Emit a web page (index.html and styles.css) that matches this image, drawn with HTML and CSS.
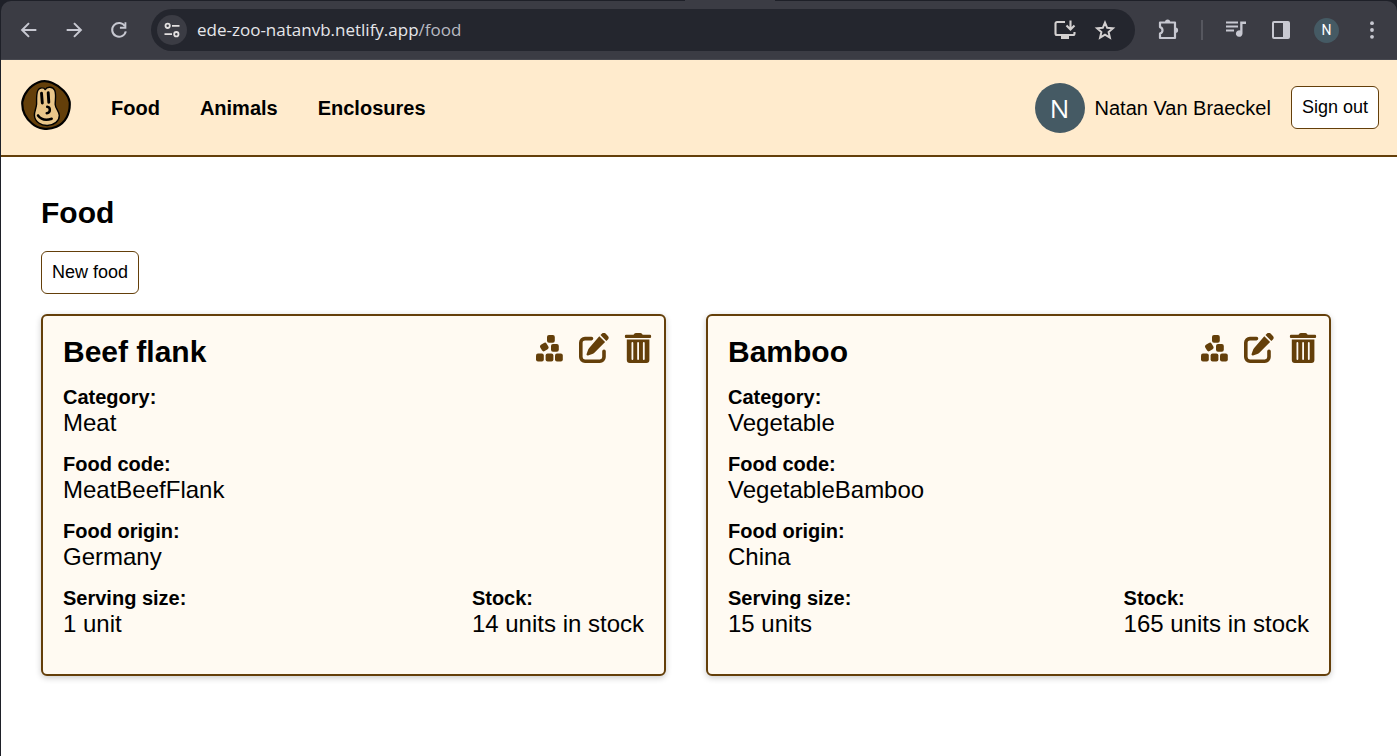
FILE: index.html
```html
<!DOCTYPE html>
<html lang="en">
<head>
<meta charset="utf-8">
<meta name="viewport" content="width=device-width, initial-scale=1">
<title>Food</title>
<link rel="stylesheet" href="styles.css">
</head>
<body>
<svg class="sprite" aria-hidden="true">
  <symbol id="cubes" viewBox="0 0 30 30">
    <rect x="13" y="2" width="7.800" height="7.800" rx="2"/>
    <rect x="6.600" y="10.300" width="7.400" height="7.400" rx="2" transform="rotate(-30 10.3 14)"/>
    <rect x="17" y="11" width="7.800" height="7.800" rx="2"/>
    <rect x="2" y="20.600" width="7.800" height="7.800" rx="2"/>
    <rect x="11.600" y="20.600" width="7.800" height="7.800" rx="2"/>
    <rect x="21" y="20.600" width="7.800" height="7.800" rx="2"/>
  </symbol>
  <symbol id="edit" viewBox="0 0 30 30">
    <path d="M12.5 5.6H6a4.2 4.2 0 0 0-4.2 4.2V24A4.2 4.2 0 0 0 6 28.2h14.8A4.2 4.2 0 0 0 25 24v-5.800" fill="none" stroke="currentColor" stroke-width="3.600" stroke-linecap="round"/>
    <path d="M20.300 3.300l5.800 5.800L15.400 19.800c-.6.600-1.300 1-2.100 1.300l-4.300 1.400c-1 .300-1.700-.400-1.400-1.400l1.500-4.300c.3-.800.700-1.500 1.300-2.100z"/>
    <path d="M21.500 2.100l1.300-1.300a2.800 2.800 0 0 1 4 0l1.900 1.900a2.800 2.800 0 0 1 0 4l-1.400 1.300z"/>
  </symbol>
  <symbol id="trash" viewBox="0 0 30 30">
    <path d="M2 1.800h7.500L10.500.5Q11 0 11.800 0h4.600q.8 0 1.300.5l1 1.300H26a1.100 1.100 0 0 1 1.100 1.100V4A1.100 1.100 0 0 1 26 5.100H2A1.100 1.100 0 0 1 .9 4V2.900A1.100 1.100 0 0 1 2 1.800z"/>
    <path fill-rule="evenodd" d="M2.800 6.600h22.600V27a3 3 0 0 1-3 3H5.800a3 3 0 0 1-3-3zM7.500 10v16a.9.9 0 0 0 1.800 0V10a.9.9 0 0 0-1.800 0zm5.700 0v16a.9.9 0 0 0 1.800 0V10a.9.9 0 0 0-1.800 0zm5.700 0v16a.9.9 0 0 0 1.800 0V10a.9.9 0 0 0-1.800 0z"/>
  </symbol>
</svg>

<div class="window">
  <div class="frame">
    <div class="tab-foot"></div>
    <div class="toolbar">
      <div class="history">
        <button class="tool" aria-label="Back"><svg viewBox="0 0 24 24"><path d="M20 12H5M12 4.500L4.500 12l7.500 7.500" fill="none" stroke="currentColor" stroke-width="2.200"/></svg></button>
        <button class="tool" aria-label="Forward"><svg viewBox="0 0 24 24"><path d="M4 12h15M12 4.500l7.500 7.500-7.500 7.500" fill="none" stroke="currentColor" stroke-width="2.200"/></svg></button>
        <button class="tool" aria-label="Reload"><svg viewBox="0 0 24 24"><path d="M18.500 8A7.500 7.500 0 1 0 19.400 13.500" fill="none" stroke="currentColor" stroke-width="2.200"/><path d="M20 3.500V10.500H13V8.500H18V3.500z"/></svg></button>
      </div>
      <div class="address">
        <button class="site-info" aria-label="View site information"><svg viewBox="0 0 24 24"><g fill="none" stroke="currentColor" stroke-width="2.200"><circle cx="6.800" cy="7" r="2.600"/><path d="M12 7h9M3 17h9"/><circle cx="17.200" cy="17" r="2.600"/></g></svg></button>
        <a class="url" href="#">ede-zoo-natanvb.netlify.app<span class="url-path">/food</span></a>
        <button class="tool" aria-label="Install app"><svg viewBox="0 0 24 24"><path d="M12 4H4a1.500 1.500 0 0 0-1.500 1.500v10A1.500 1.500 0 0 0 4 17h16a1.500 1.500 0 0 0 1.500-1.500V14M17.500 2.500v8M13.500 7.500l4 4 4-4" fill="none" stroke="currentColor" stroke-width="2.100"/><path d="M8 17h8v4H8z"/></svg></button>
        <button class="tool" aria-label="Bookmark this page"><svg viewBox="0 0 24 24"><path d="M12 4.600l2.200 5.200 5.700.5-4.300 3.700 1.300 5.600-4.900-3-4.900 3 1.300-5.600-4.300-3.700 5.700-.5z" fill="none" stroke="currentColor" stroke-width="2"/></svg></button>
      </div>
      <div class="extras">
        <button class="tool" aria-label="Extensions"><svg viewBox="0 0 24 24"><path d="M4 4.500h15v15.500H4v-4.500a3.300 3.300 0 0 0 0-6.400z" fill="none" stroke="currentColor" stroke-width="2.200" stroke-linejoin="round"/><path d="M9 4a2.600 2.600 0 0 1 5.200 0zM19.500 9.600a2.600 2.600 0 0 1 0 5.200z"/></svg></button>
        <span class="divider"></span>
        <button class="tool" aria-label="Media controls"><svg viewBox="0 0 24 24"><path d="M2 4.500h12M2 8.500h12M2 12.500h8" fill="none" stroke="currentColor" stroke-width="2"/><path d="M16.200 3.500H22V6h-3.500v9.500a3.300 3.300 0 1 1-2.300-3.100z"/></svg></button>
        <button class="tool" aria-label="Side panel"><svg viewBox="0 0 24 24"><path d="M5 3h14a2 2 0 0 1 2 2v14a2 2 0 0 1-2 2H5a2 2 0 0 1-2-2V5a2 2 0 0 1 2-2zm0 2v14h9V5z" fill-rule="evenodd"/></svg></button>
        <button class="profile" aria-label="Profile">N</button>
        <button class="tool" aria-label="Menu"><svg viewBox="0 0 24 24"><circle cx="12" cy="5.200" r="1.900"/><circle cx="12" cy="12" r="1.900"/><circle cx="12" cy="18.800" r="1.900"/></svg></button>
      </div>
    </div>
  </div>

  <header class="site-header">
    <a class="logo" href="#" aria-label="Home">
      <svg viewBox="0 0 50 50" stroke-linecap="round" stroke-linejoin="round">
        <path d="M17 2.500C22 .5 26 .6 31 2.800C40 6.500 47 14 48.700 22C49.500 34 44 43 35.500 46.800C27 50.500 17 49 11 43.500C4 37.500.8 30 1.300 22C2.500 14 9 5.500 17 2.500z" fill="#643f0a" stroke="#000" stroke-width="2.200"/>
        <path d="M24.200 9.600C23 7.200 18.500 7 16.800 10.500C15.200 14 15.600 20 15.600 24C15.400 28 13.200 31.500 13.400 35.500C14 42 20 45.700 26.500 45.500C33.500 45 38.400 41 38.300 35.500C38 31 34.400 28.500 34.200 24.500C34.200 20 35.400 15 33.800 10.500C32 6.500 26 6.200 24.200 9.600z" fill="#e9c68a" stroke="#000" stroke-width="1.400"/>
        <g fill="none" stroke="#000"><path d="M20.500 13.200L21.300 23M27.200 12.600L27.800 22.400" stroke-width="2.900"/><path d="M26.200 26.800C29.600 27.200 30 32.600 25.700 33.200" stroke-width="2.500"/><path d="M17 35.400C20 39.500 25.500 40.400 30.700 38.700" stroke-width="2.500"/></g>
      </svg>
    </a>
    <nav class="nav"><a href="#">Food</a><a href="#">Animals</a><a href="#">Enclosures</a></nav>
    <div class="account">
      <span class="avatar">N</span>
      <span class="user-name">Natan Van Braeckel</span>
      <button class="button">Sign out</button>
    </div>
  </header>

  <main class="page">
    <h1>Food</h1>
    <button class="button">New food</button>
    <div class="cards">
      <article class="card">
        <div class="card-head">
          <h2>Beef flank</h2>
          <div class="actions">
            <button aria-label="Stock of Beef flank"><svg><use href="#cubes"/></svg></button>
            <button aria-label="Edit Beef flank"><svg><use href="#edit"/></svg></button>
            <button aria-label="Delete Beef flank"><svg><use href="#trash"/></svg></button>
          </div>
        </div>
        <dl class="details">
          <div><dt>Category:</dt><dd>Meat</dd></div>
          <div><dt>Food code:</dt><dd>MeatBeefFlank</dd></div>
          <div><dt>Food origin:</dt><dd>Germany</dd></div>
        </dl>
        <dl class="amounts">
          <div><dt>Serving size:</dt><dd>1 unit</dd></div>
          <div><dt>Stock:</dt><dd>14 units in stock</dd></div>
        </dl>
      </article>
      <article class="card">
        <div class="card-head">
          <h2>Bamboo</h2>
          <div class="actions">
            <button aria-label="Stock of Bamboo"><svg><use href="#cubes"/></svg></button>
            <button aria-label="Edit Bamboo"><svg><use href="#edit"/></svg></button>
            <button aria-label="Delete Bamboo"><svg><use href="#trash"/></svg></button>
          </div>
        </div>
        <dl class="details">
          <div><dt>Category:</dt><dd>Vegetable</dd></div>
          <div><dt>Food code:</dt><dd>VegetableBamboo</dd></div>
          <div><dt>Food origin:</dt><dd>China</dd></div>
        </dl>
        <dl class="amounts">
          <div><dt>Serving size:</dt><dd>15 units</dd></div>
          <div><dt>Stock:</dt><dd>165 units in stock</dd></div>
        </dl>
      </article>
    </div>
  </main>
</div>
</body>
</html>
```
FILE: styles.css
```css
:root {
  --brown: #643f0a;
  --cream: #ffebcd;
  --card: #fffaf2;
  --frame: #1e2028;
  --bar: #3b3c44;
  --pill: #24262e;
  --tool: #c7c8d1;
}

* { box-sizing: border-box; }

body {
  margin: 0;
  background: #fff;
  color: #000;
  font: 20px/24px "Liberation Sans", Arial, sans-serif;
}

button {
  margin: 0;
  padding: 0;
  border: 0;
  background: none;
  color: inherit;
  font: inherit;
}

a { color: inherit; text-decoration: none; }
h1, h2, dl, dd { margin: 0; }
svg { display: block; fill: currentColor; }
.sprite { display: none; }

.window {
  min-height: 100vh;
  border-left: 1px solid var(--frame);
}

/* Browser toolbar */
.frame {
  position: relative;
  padding-top: 1px;
  background: var(--frame);
}

.tab-foot {
  position: absolute;
  top: 0;
  left: 49%;
  width: 90px;
  height: 2px;
  background: var(--bar);
}

.toolbar {
  display: flex;
  align-items: center;
  height: 59px;
  padding: 0 13px 0 16px;
  border-radius: 10px 10px 0 0;
  border-bottom: 1px solid #484950;
  background: var(--bar);
  color: var(--tool);
}

.history { display: flex; gap: 21px; margin-right: 20px; }
.tool { flex: none; width: 24px; height: 24px; }
.tool svg { width: 24px; height: 24px; }
.history svg { width: 22px; height: 22px; margin: 1px; }

.address {
  display: flex;
  flex: 1;
  align-items: center;
  gap: 16px;
  height: 42px;
  padding: 0 18px 0 6px;
  border-radius: 21px;
  background: var(--pill);
  color: #d3d0d0;
}

.site-info {
  display: flex;
  align-items: center;
  justify-content: center;
  width: 30px;
  height: 30px;
  border-radius: 50%;
  background: var(--bar);
  color: #e3e0e0;
}

.site-info svg { width: 20px; height: 20px; }

.url {
  flex: 1;
  margin-left: -6px;
  color: #e6e6ea;
  font: 17px/24px "Open Sans", "Noto Sans", sans-serif;
}

.url-path { color: #b9bac2; }

.extras {
  display: flex;
  align-items: center;
  gap: 21px;
  margin-left: 21px;
}

.divider { width: 2px; height: 20px; background: #56575f; }

.profile {
  width: 25px;
  height: 25px;
  border-radius: 50%;
  background: #455a64;
  color: #fff;
  font: 14px/25px Roboto, sans-serif;
}

/* Site header */
.site-header {
  display: flex;
  align-items: center;
  padding: 20px 18px 20px 20px;
  border-bottom: 2px solid var(--brown);
  background: var(--cream);
}

.logo { align-self: flex-start; height: 55px; margin-right: 40px; }
.logo svg { width: 50px; height: 50px; }

.nav { display: flex; gap: 40px; font-weight: bold; line-height: 22px; }

.account { display: flex; align-items: center; margin-left: auto; }

.avatar {
  width: 50px;
  height: 50px;
  margin-right: 10px;
  border-radius: 50%;
  background: #455a64;
  color: #fff;
  font: 26px/51px "Open Sans", sans-serif;
  text-align: center;
}

.user-name { margin-right: 20px; line-height: 22px; }

.button {
  padding: 10px;
  border: 1px solid var(--brown);
  border-radius: 6px;
  background: #fff;
  font-size: 18px;
  line-height: 21px;
}

/* Food overview */
.page { padding: 40px 66px 40px 40px; }

h1, h2 { font-size: 30px; line-height: 32px; }
h1 { margin-bottom: 22px; }

.cards {
  display: grid;
  grid-template-columns: repeat(2, 1fr);
  gap: 40px;
  margin-top: 20px;
}

.card {
  padding: 17px 10px 36px 20px;
  border: 2px solid var(--brown);
  border-radius: 6px;
  background: var(--card);
  box-shadow: 0 2px 6px rgb(0 0 0 / 20%);
}

.card-head {
  display: flex;
  justify-content: space-between;
  margin-bottom: 17px;
}

.card-head h2 { padding-top: 3px; }

.actions { display: flex; gap: 15px; color: var(--brown); }
.actions button { width: 30px; height: 30px; }
.actions svg { width: 30px; height: 30px; }

.details { display: grid; gap: 15px; margin-bottom: 15px; }

.amounts {
  display: flex;
  justify-content: space-between;
  margin-right: 10px;
}

dt { font-weight: bold; }
dd { font-size: 24px; line-height: 28px; }
```
